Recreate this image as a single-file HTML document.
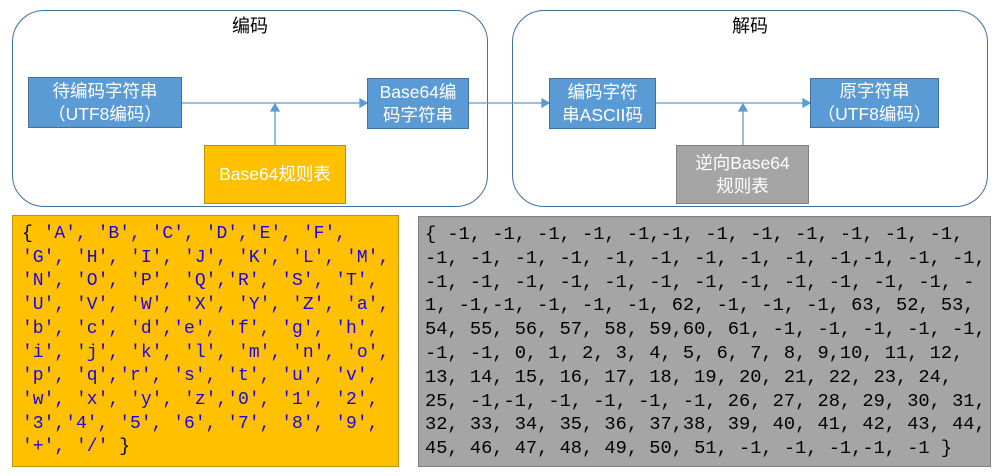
<!DOCTYPE html>
<html><head><meta charset="utf-8"><style>
body{margin:0;width:1002px;height:476px;background:#fff;position:relative;overflow:hidden;font-family:"Liberation Sans","Noto Sans CJK SC",sans-serif}
.a{position:absolute;box-sizing:border-box}
.c{border:1.5px solid #41719c;border-radius:32px}
.t{font-size:18px;color:#000;text-align:center;width:100%;top:3px;line-height:24px}
.b{background:#5b9bd5;border:1.5px solid #41719c;color:#fff;font-size:17.5px;line-height:23px;display:flex;align-items:center;justify-content:center;text-align:center}
.y{background:#ffc000;border:1.5px solid #bf9000}
.g{background:#a5a5a5;border:1.5px solid #7f7f7f}
pre{margin:0;font-family:"Liberation Mono",monospace;white-space:pre}
</style></head><body>
<div class="a c" style="left:12px;top:10px;width:476px;height:197px"><div class="a t">编码</div></div>
<div class="a c" style="left:512px;top:10px;width:476px;height:197px"><div class="a t">解码</div></div>
<svg class="a" style="left:0;top:0" width="1002" height="210">
<g stroke="#5b9bd5" stroke-width="1.3" fill="#5b9bd5">
<line x1="181" y1="103" x2="362" y2="103"/><polygon points="367,103 360,99 360,107"/>
<line x1="468" y1="103" x2="544" y2="103"/><polygon points="549,103 542,99 542,107"/>
<line x1="655" y1="103" x2="805" y2="103"/><polygon points="810,103 803,99 803,107"/>
<line x1="275" y1="145" x2="275" y2="110"/><polygon points="275,104 271,111 279,111"/>
<line x1="743" y1="145" x2="743" y2="110"/><polygon points="743,104 739,111 747,111"/>
</g></svg>
<div class="a b" style="left:28px;top:77px;width:154px;height:51px">待编码字符串<br>（UTF8编码）</div>
<div class="a b" style="left:367px;top:78px;width:102px;height:51px">Base64编<br>码字符串</div>
<div class="a b y" style="left:204px;top:145px;width:142px;height:59px">Base64规则表</div>
<div class="a b" style="left:549px;top:78px;width:107px;height:51px">编码字符<br>串ASCII码</div>
<div class="a b" style="left:810px;top:78px;width:129px;height:50px">原字符串<br>（UTF8编码）</div>
<div class="a b g" style="left:676px;top:145px;width:133px;height:59px">逆向Base64<br>规则表</div>
<div class="a y" style="left:12px;top:215px;width:387px;height:252px;padding:7px 0 0 9px"><pre style="font-size:18px;line-height:23.7px;color:#2000e0"><span style="color:#000">{</span> 'A', 'B', 'C', 'D','E', 'F',
'G', 'H', 'I', 'J', 'K', 'L', 'M',
'N', 'O', 'P', 'Q','R', 'S', 'T',
'U', 'V', 'W', 'X', 'Y', 'Z', 'a',
'b', 'c', 'd','e', 'f', 'g', 'h',
'i', 'j', 'k', 'l', 'm', 'n', 'o',
'p', 'q','r', 's', 't', 'u', 'v',
'w', 'x', 'y', 'z','0', '1', '2',
'3','4', '5', '6', '7', '8', '9',
'+', '/' <span style="color:#000">}</span></pre></div>
<div class="a g" style="left:418px;top:216px;width:573px;height:251px;padding:6px 0 0 6px"><pre style="font-size:18.7px;line-height:23.8px;color:#000">{ -1, -1, -1, -1, -1,-1, -1, -1, -1, -1, -1, -1,
-1, -1, -1, -1, -1, -1, -1, -1, -1, -1,-1, -1, -1,
-1, -1, -1, -1, -1, -1, -1, -1, -1, -1, -1, -1, -
1, -1,-1, -1, -1, -1, 62, -1, -1, -1, 63, 52, 53,
54, 55, 56, 57, 58, 59,60, 61, -1, -1, -1, -1, -1,
-1, -1, 0, 1, 2, 3, 4, 5, 6, 7, 8, 9,10, 11, 12,
13, 14, 15, 16, 17, 18, 19, 20, 21, 22, 23, 24,
25, -1,-1, -1, -1, -1, -1, 26, 27, 28, 29, 30, 31,
32, 33, 34, 35, 36, 37,38, 39, 40, 41, 42, 43, 44,
45, 46, 47, 48, 49, 50, 51, -1, -1, -1,-1, -1 }</pre></div>
</body></html>
